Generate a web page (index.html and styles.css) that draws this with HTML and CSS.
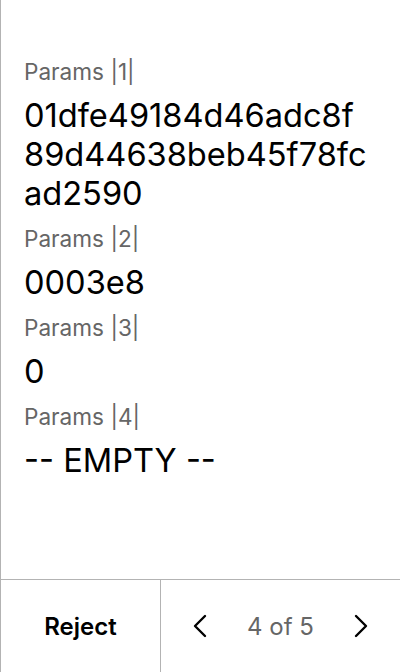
FILE: index.html
```html
<!DOCTYPE html>
<html>
<head>
<meta charset="utf-8">
<link rel="stylesheet" href="styles.css">
</head>
<body>
<div class="screen">
  <div class="content">
    <div class="field">
      <div class="label">Params |1|</div>
      <div class="value">01dfe49184d46adc8f<br>89d44638beb45f78fc<br>ad2590</div>
    </div>
    <div class="field">
      <div class="label">Params |2|</div>
      <div class="value">0003e8</div>
    </div>
    <div class="field">
      <div class="label">Params |3|</div>
      <div class="value">0</div>
    </div>
    <div class="field">
      <div class="label">Params |4|</div>
      <div class="value">-- EMPTY --</div>
    </div>
  </div>
  <div class="footer">
    <div class="reject">Reject</div>
    <div class="pager">
      <svg class="chev" width="16" height="24" viewBox="0 0 16 24"><path d="M13 2 L3 12 L13 22" fill="none" stroke="#000" stroke-width="2.4" stroke-linecap="round" stroke-linejoin="round"/></svg>
      <span class="count">4 of 5</span>
      <svg class="chev" width="16" height="24" viewBox="0 0 16 24"><path d="M3 2 L13 12 L3 22" fill="none" stroke="#000" stroke-width="2.4" stroke-linecap="round" stroke-linejoin="round"/></svg>
    </div>
  </div>
</div>
</body>
</html>
```

FILE: styles.css
```css
html, body {
  margin: 0;
  padding: 0;
  background: #fff;
}
body {
  font-family: Inter, "Noto Sans", sans-serif;
  color: #000;
}
.screen {
  width: 400px;
  height: 672px;
  box-sizing: border-box;
  border-left: 1px solid #b3b3b3;
  display: flex;
  flex-direction: column;
}
.content {
  flex: 1;
  padding: 58px 0 0 23px;
  display: flex;
  flex-direction: column;
  gap: 12px;
}
.field {
  display: flex;
  flex-direction: column;
  gap: 10px;
}
.label {
  font-size: 22.6px;
  line-height: 28px;
  color: #666;
}
.value {
  font-size: 32.6px;
  line-height: 39px;
  color: #000;
}
.footer {
  height: 92px;
  border-top: 1px solid #b3b3b3;
  display: flex;
}
.reject {
  width: 159px;
  border-right: 1px solid #b3b3b3;
  display: flex;
  align-items: center;
  justify-content: center;
  font-size: 24px;
  font-weight: 600;
}
.pager {
  flex: 1;
  display: flex;
  align-items: center;
  justify-content: space-between;
  padding: 0 31px 0 31px;
}
.count {
  font-size: 24px;
  color: #666;
}
.chev {
  display: block;
}
```
